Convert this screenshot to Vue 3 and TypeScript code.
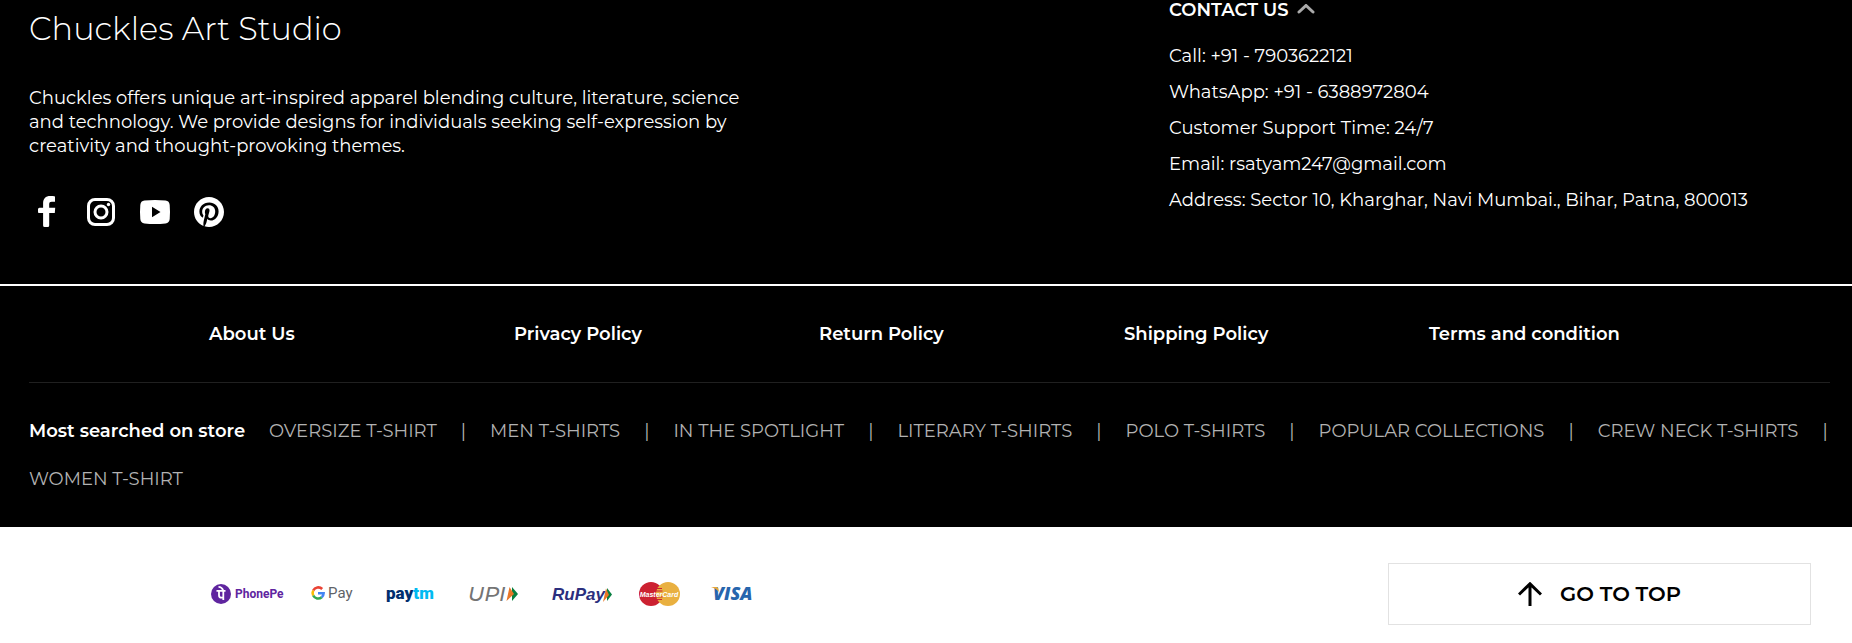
<script setup lang="ts">
import { ref } from 'vue'

interface Contact {
  label: string
  value: string
}

const contactOpen = ref(true)

const contacts: Contact[] = [
  { label: 'Call', value: '+91 - 7903622121' },
  { label: 'WhatsApp', value: '+91 - 6388972804' },
  { label: 'Customer Support Time', value: '24/7' },
  { label: 'Email', value: 'rsatyam247@gmail.com' },
  { label: 'Address', value: 'Sector 10, Kharghar, Navi Mumbai., Bihar, Patna, 800013' },
]

const policies: string[] = [
  'About Us',
  'Privacy Policy',
  'Return Policy',
  'Shipping Policy',
  'Terms and condition',
]

const searches: string[] = [
  'OVERSIZE T-SHIRT',
  'MEN T-SHIRTS',
  'IN THE SPOTLIGHT',
  'LITERARY T-SHIRTS',
  'POLO T-SHIRTS',
  'POPULAR COLLECTIONS',
  'CREW NECK T-SHIRTS',
  'WOMEN T-SHIRT',
]

function goToTop(): void {
  window.scrollTo({ top: 0, behavior: 'smooth' })
}
</script>

<template>
  <footer class="footer">
    <div class="dark">
      <div class="intro">
        <section class="about">
          <h2 class="brand">Chuckles Art Studio</h2>
          <p class="blurb">
            Chuckles offers unique art-inspired apparel blending culture, literature, science<br />
            and technology. We provide designs for individuals seeking self-expression by<br />
            creativity and thought-provoking themes.
          </p>
          <nav class="social" aria-label="Social media">
            <a href="#" aria-label="Facebook">
              <svg viewBox="0 0 36 36" aria-hidden="true">
                <path d="M26 2.400v5.400h-3.200c-1.900 0-2.600.8-2.600 2.500v3.400h6l-.4 5.300h-5.600v12.500q0 1.500-1.500 1.500h-3.100q-1.500 0-1.500-1.500V19h-4.300Q9 19 9 17.500v-2.300q0-1.500 1.500-1.500h3.600V9.500c0-4.900 2.500-7.500 7.200-7.500 1.900 0 3.600.1 4.700.4z" fill="#fff" />
              </svg>
            </a>
            <a href="#" aria-label="Instagram">
              <svg viewBox="0 0 36 36" aria-hidden="true">
                <rect x="5.500" y="5.500" width="25" height="25" rx="6.500" fill="none" stroke="#fff" stroke-width="3" />
                <circle cx="18" cy="18" r="6" fill="none" stroke="#fff" stroke-width="3" />
                <circle cx="25.500" cy="10.500" r="1.700" fill="#fff" />
              </svg>
            </a>
            <a href="#" aria-label="YouTube">
              <svg viewBox="0 0 36 36" aria-hidden="true">
                <path d="M7.500 6.600Q18 5.500 28.500 6.600 32.400 7 32.700 11q.6 7 0 14-.3 4-4.200 4.400-10.500 1.100-21 0Q3.600 29 3.300 25q-.6-7 0-14 .3-4 4.200-4.400zM15 12.800v10.400l8.500-5.200z" fill="#fff" fill-rule="evenodd" />
              </svg>
            </a>
            <a href="#" aria-label="Pinterest">
              <svg viewBox="0 0 24 24" aria-hidden="true">
                <path transform="translate(2 2) scale(.8333)" d="M12 0C5.373 0 0 5.372 0 12c0 5.084 3.163 9.426 7.627 11.174-.105-.949-.2-2.405.042-3.441.218-.937 1.407-5.965 1.407-5.965s-.359-.719-.359-1.782c0-1.668.967-2.914 2.171-2.914 1.023 0 1.518.769 1.518 1.690 0 1.029-.655 2.568-.994 3.995-.283 1.194.599 2.169 1.777 2.169 2.133 0 3.772-2.249 3.772-5.495 0-2.873-2.064-4.882-5.012-4.882-3.414 0-5.418 2.561-5.418 5.207 0 1.031.397 2.138.893 2.738.098.119.112.224.083.345l-.333 1.360c-.053.220-.174.267-.402.161-1.499-.698-2.436-2.889-2.436-4.649 0-3.785 2.750-7.262 7.929-7.262 4.163 0 7.398 2.967 7.398 6.931 0 4.136-2.607 7.464-6.227 7.464-1.216 0-2.359-.631-2.750-1.378l-.748 2.853c-.271 1.043-1.002 2.350-1.492 3.146C9.570 23.812 10.763 24 12 24c6.627 0 12-5.373 12-12S18.627 0 12 0z" fill="#fff" />
              </svg>
            </a>
          </nav>
        </section>

        <section class="contact">
          <button class="contact-toggle" type="button" :aria-expanded="contactOpen" @click="contactOpen = !contactOpen">
            CONTACT US
            <svg viewBox="0 0 18 12" aria-hidden="true">
              <path d="M2 8 9 1.500l7 6.500" fill="none" stroke="#aaa" stroke-width="3" stroke-linecap="round" />
            </svg>
          </button>
          <ul v-show="contactOpen" class="contact-list">
            <li v-for="c in contacts" :key="c.label">{{ c.label }}: {{ c.value }}</li>
          </ul>
        </section>
      </div>

      <div class="links">
        <nav class="policies" aria-label="Policies">
          <a v-for="p in policies" :key="p" href="#">{{ p }}</a>
        </nav>
        <div class="searches">
          <strong>Most searched on store</strong>
          <template v-for="(s, i) in searches" :key="s">
            <a href="#">{{ s }}</a>
            <span v-if="i < searches.length - 1" class="bar">|</span>
          </template>
        </div>
      </div>
    </div>

    <div class="bottom">
      <div class="payments">
        <svg width="76" height="28" viewBox="0 0 76 28" role="img" aria-label="PhonePe">
          <circle cx="11" cy="14" r="10" fill="#5f259f" />
          <path d="M6.500 10.800h9M9 10.800v4.400q0 2.500 2.500 2.500h1.800M13.300 10.800V20M8.500 6.800q3.500 0 4.800 4" fill="none" stroke="#fff" stroke-width="1.800" />
          <text class="phonepe" x="25" y="18">PhonePe</text>
        </svg>
        <svg width="48" height="28" viewBox="0 0 48 28" role="img" aria-label="Google Pay">
          <g fill="none" stroke-width="2.600">
            <path d="M12.200 9A5.600 5.600 0 0 0 3.200 10.500" stroke="#ea4335" />
            <path d="M3.200 10.500a5.600 5.600 0 0 0 0 5" stroke="#fbbc04" />
            <path d="M3.200 15.500a5.600 5.600 0 0 0 8.500 1.800" stroke="#34a853" />
            <path d="M11.700 17.300A5.600 5.600 0 0 0 13.600 13.300H8" stroke="#4285f4" />
          </g>
          <text class="gpay" x="18" y="18">Pay</text>
        </svg>
        <svg width="56" height="28" viewBox="0 0 56 28" role="img" aria-label="Paytm">
          <text class="paytm" x="4" y="19">pay<tspan fill="#00baf2">tm</tspan></text>
        </svg>
        <svg width="62" height="28" viewBox="0 0 62 28" role="img" aria-label="UPI">
          <text class="upi" x="6" y="21">UPI</text>
          <path d="M50 7v14l6-7z" fill="#098041" />
          <path d="M47.500 7 44.500 21l7.500-7z" fill="#e97626" />
        </svg>
        <svg width="64" height="28" viewBox="0 0 64 28" role="img" aria-label="RuPay">
          <text class="rupay" x="4" y="20">RuPay</text>
          <path d="M59 8v13l5-6.500z" fill="#098041" />
          <path d="M58 8.500 55 22l6-7z" fill="#e97626" />
        </svg>
        <svg width="46" height="28" viewBox="0 0 46 28" role="img" aria-label="MasterCard">
          <circle cx="15" cy="14" r="12" fill="#cc2131" />
          <circle cx="32" cy="14" r="12" fill="#e9b040" />
          <path d="M21 8.500h5M20 11h6.500M20 17h6.500M21 19.500h5" stroke="#cc2131" />
          <text class="mastercard" x="23" y="17">MasterCard</text>
        </svg>
        <svg width="48" height="28" viewBox="0 0 48 28" role="img" aria-label="Visa">
          <text class="visa" x="7" y="20">VISA</text>
          <path d="M5 7h5.500q1.500 0 1.900 1.500L13 12Q10.500 8.500 5 7z" fill="#e7a83b" />
        </svg>
      </div>
      <button class="top" type="button" @click="goToTop">
        <svg viewBox="0 0 24 24" aria-hidden="true">
          <path d="M12 24V2M1 12.500 12 1.800l11 10.700" fill="none" stroke="#000" stroke-width="3" />
        </svg>
        GO TO TOP
      </button>
    </div>
  </footer>
</template>

<style>
body {
  margin: 0;
  background: #fff;
}
</style>

<style scoped>
.footer {
  font-family: Montserrat, Inter, sans-serif;
  font-size: 18px;
  line-height: 24px;
}
.dark {
  background: #000;
  color: #fff;
}
.intro {
  display: grid;
  grid-template-columns: 1140fr 655fr;
  padding: 0 28px 54px 29px;
  border-bottom: 2px solid #fff;
}
.brand {
  margin: 8px 0 36px;
  font-size: 32px;
  font-weight: 350;
  line-height: 42px;
}
.blurb {
  margin: 0 0 36px;
}
.social {
  display: flex;
  gap: 18px;
}
.social a,
.social svg {
  display: block;
  width: 36px;
  height: 36px;
}
.contact-toggle {
  display: flex;
  align-items: center;
  gap: 8px;
  margin: 0 0 18px;
  padding: 0;
  border: 0;
  background: none;
  color: #fff;
  font: inherit;
  font-weight: 600;
  line-height: 20px;
}
.contact-toggle svg {
  width: 18px;
  height: 12px;
}
.contact-list {
  margin: 0;
  padding: 0;
  list-style: none;
  line-height: 36px;
}
.links {
  padding: 0 22px 24px 29px;
}
a {
  color: inherit;
  text-decoration: none;
}
.policies {
  display: grid;
  grid-template-columns: repeat(5, 1fr);
  padding: 36px 96px 36px 180px;
  border-bottom: 1px solid #202020;
  font-weight: 600;
}
.searches {
  display: flex;
  flex-wrap: wrap;
  column-gap: 24px;
  padding-top: 24px;
  line-height: 48px;
  color: #b2b2b2;
}
.searches strong {
  color: #fff;
  font-weight: 600;
}
.bottom {
  display: grid;
  grid-template-columns: 1178fr 423fr;
  align-items: center;
  padding: 36px 41px 18px 210px;
}
.payments {
  display: flex;
  gap: 24px;
}
.phonepe {
  font: 700 12px Roboto, sans-serif;
  fill: #5f259f;
}
.gpay {
  font: 400 15px Roboto, sans-serif;
  fill: #5f6368;
}
.paytm {
  font: 900 17px Roboto, sans-serif;
  fill: #002e6e;
}
.upi {
  font: italic 500 21px Montserrat, "DejaVu Sans", sans-serif;
  fill: #747474;
}
.rupay {
  font: italic 700 17px "Liberation Sans", sans-serif;
  fill: #2b2f7e;
}
.mastercard {
  font: italic 700 7px "Liberation Sans", sans-serif;
  fill: #fff;
  text-anchor: middle;
}
.visa {
  font: italic 800 18px "Open Sans", sans-serif;
  fill: #2765ad;
}
.top {
  display: flex;
  align-items: center;
  justify-content: center;
  gap: 18px;
  height: 62px;
  padding: 0;
  border: 1px solid #e2e2e2;
  background: #fff;
  color: #000;
  font: inherit;
  font-size: 21px;
  font-weight: 600;
}
.top svg {
  width: 24px;
  height: 24px;
}
</style>
